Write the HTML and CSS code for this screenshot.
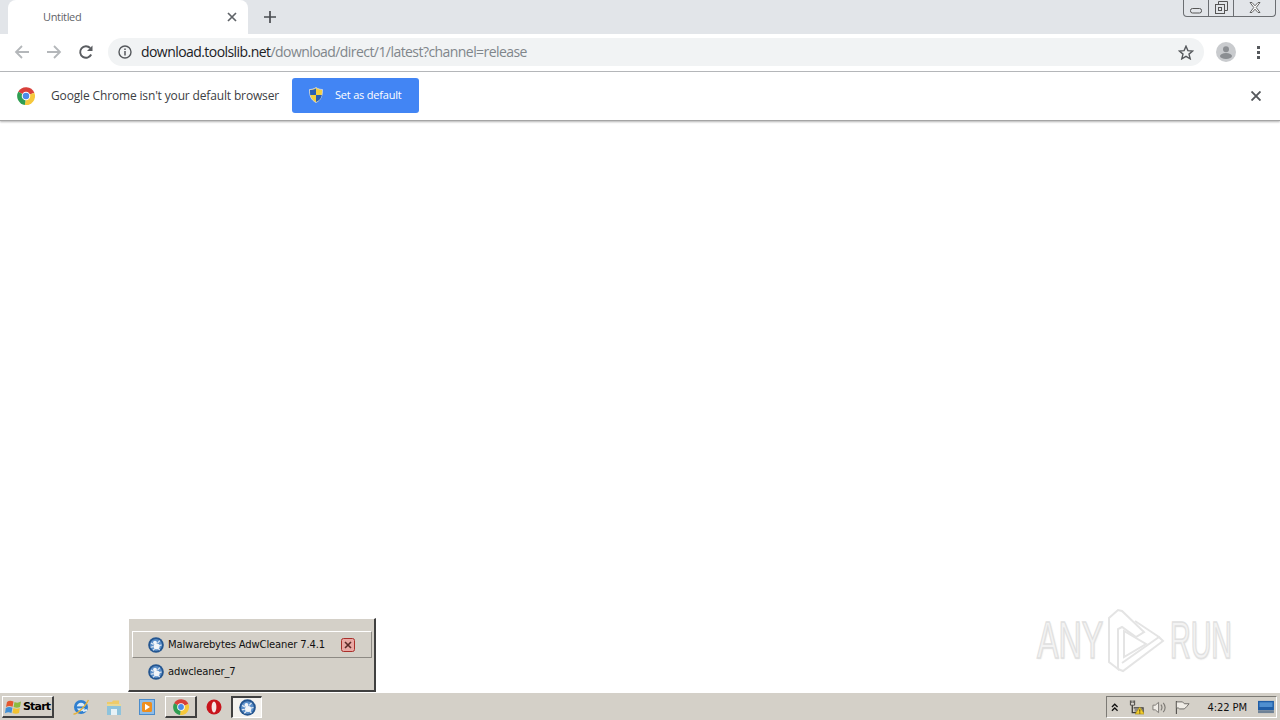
FILE: index.html
```html
<!DOCTYPE html>
<html lang="en">
    <head>
        <meta charset="UTF-8">
        <title>Untitled</title>
        <link rel="stylesheet" href="styles.css">
    </head>

    <body class="desktop">
        <svg class="icon-defs" width="0" height="0">
            <defs>
                <g id="chrome-logo">
                    <path d="M8 8 L1.1 4.2 A8 8 0 0 1 15.4 5 Z" fill="#d8403a"/>
                    <path d="M8 8 L15.4 5 A8 8 0 0 1 7 16 Z" fill="#f6c83c"/>
                    <path d="M8 8 L7 16 A8 8 0 0 1 1.1 4.2 Z" fill="#2f9e52"/>
                    <circle cx="8" cy="8" r="3.8" fill="#fff"/>
                    <circle cx="8" cy="8" r="2.9" fill="#4a8be8"/>
                </g>
                <g id="adw-logo">
                    <circle cx="8" cy="8" r="7.8" fill="#24558f"/>
                    <circle cx="8" cy="8" r="6" fill="#5b8fc9"/>
                    <ellipse cx="8.6" cy="9.4" rx="3" ry="2.8" fill="#f2f5f8"/>
                    <circle cx="7" cy="5.6" r="1.9" fill="#f2f5f8"/>
                    <path d="M3 6 L5.5 7.5 M11.8 3.6 L9.6 6 M2.6 10.2 L5.5 9.6 M13.6 8 L11 8.6 M5 13.4 L7 11.4 M11.6 13.2 L10 11.2" stroke="#e8edf3" stroke-width="1.1"/>
                </g>
            </defs>
        </svg>

        <header class="tabstrip">
            <div class="tabstrip__tab">
                <span class="tabstrip__tab__title">Untitled</span>
                <svg class="tabstrip__tab__close" width="10" height="10" viewBox="0 0 10 10">
                    <path d="M1 1 L9 9 M9 1 L1 9" stroke="#5f6368" stroke-width="1.7"/>
                </svg>
            </div>
            <svg class="tabstrip__new" width="12" height="12" viewBox="0 0 12 12">
                <path d="M6 0 V12 M0 6 H12" stroke="#4a4d51" stroke-width="1.7"/>
            </svg>
            <div class="tabstrip__controls">
                <span class="tabstrip__controls__button tabstrip__controls__button--min">
                    <svg width="12" height="6" viewBox="0 0 12 6"><rect x="0.5" y="0.5" width="11" height="4.5" rx="2" fill="none" stroke="#555"/></svg>
                </span>
                <span class="tabstrip__controls__button tabstrip__controls__button--max">
                    <svg width="13" height="13" viewBox="0 0 13 13"><path d="M3.5 3 V0.5 H12.5 V9.5 H10" fill="none" stroke="#555"/><rect x="0.5" y="3.5" width="9" height="9" fill="none" stroke="#555"/><rect x="3.5" y="6.5" width="3" height="3" fill="none" stroke="#555"/></svg>
                </span>
                <span class="tabstrip__controls__button tabstrip__controls__button--close">
                    <svg width="12" height="11" viewBox="0 0 12 11"><path d="M1 0.5 H3 L6 3.8 L9 0.5 H11 L7.2 5.5 L11 10.5 H9 L6 7.2 L3 10.5 H1 L4.8 5.5 Z" fill="#fff" stroke="#555" stroke-width="0.9"/></svg>
                </span>
            </div>
        </header>

        <nav class="toolbar">
            <svg class="toolbar__icon" width="16" height="16" viewBox="0 0 16 16">
                <path d="M15 8 H2 M8 2 L2 8 L8 14" fill="none" stroke="#b4b7ba" stroke-width="1.8"/>
            </svg>
            <svg class="toolbar__icon" width="16" height="16" viewBox="0 0 16 16">
                <path d="M1 8 H14 M8 2 L14 8 L8 14" fill="none" stroke="#b4b7ba" stroke-width="1.8"/>
            </svg>
            <svg class="toolbar__icon" width="16" height="16" viewBox="0 0 16 16">
                <path d="M13.2 10.5 A5.8 5.8 0 1 1 12.2 4" fill="none" stroke="#5a5d61" stroke-width="1.9"/>
                <path d="M14.5 1.5 V7 H9 Z" fill="#5a5d61"/>
            </svg>
            <div class="toolbar__omnibox">
                <svg class="toolbar__omnibox__info" width="14" height="14" viewBox="0 0 14 14">
                    <circle cx="7" cy="7" r="6" fill="none" stroke="#55585c" stroke-width="1.4"/>
                    <path d="M7 6 V10.5 M7 3.4 V5" stroke="#55585c" stroke-width="1.5"/>
                </svg>
                <span class="toolbar__omnibox__url"><span class="toolbar__omnibox__host">download.toolslib.net</span>/download/direct/1/latest?channel=release</span>
                <svg class="toolbar__omnibox__star" width="16" height="15" viewBox="0 0 16 15">
                    <path d="M8 1.2 L9.9 5.6 L14.7 6 L11 9.1 L12.2 13.8 L8 11.3 L3.8 13.8 L5 9.1 L1.3 6 L6.1 5.6 Z" fill="none" stroke="#55585c" stroke-width="1.4"/>
                </svg>
            </div>
            <svg class="toolbar__avatar" width="20" height="20" viewBox="0 0 20 20">
                <circle cx="10" cy="10" r="10" fill="#c9cbce"/>
                <circle cx="10" cy="7.2" r="3" fill="#8b8e92"/>
                <ellipse cx="10" cy="14" rx="6" ry="3" fill="#8b8e92"/>
            </svg>
            <span class="toolbar__menu">
                <span class="toolbar__menu__dot"></span>
                <span class="toolbar__menu__dot"></span>
                <span class="toolbar__menu__dot"></span>
            </span>
        </nav>

        <section class="infobar">
            <svg class="infobar__logo" width="18" height="18" viewBox="0 0 16 16"><use href="#chrome-logo"/></svg>
            <span class="infobar__message">Google Chrome isn't your default browser</span>
            <button class="infobar__button">
                <svg class="infobar__button__shield" width="16" height="16" viewBox="0 0 16 16">
                    <path d="M8 0.5 C10 2 12.5 2.5 14.5 2.5 C14.5 9 13 13 8 15.5 C3 13 1.5 9 1.5 2.5 C3.5 2.5 6 2 8 0.5 Z" fill="#f4d03f" stroke="#d5dbe6" stroke-width="0.8"/>
                    <path d="M8 1.5 V8 H2.2 C2.1 6 2 4.5 2 3 C4 3 6 2.6 8 1.5 Z M8 8 H13.8 C13.4 11 12 13.3 8 15 Z" fill="#2a5fb4"/>
                </svg>
                <span class="infobar__button__label">Set as default</span>
            </button>
            <svg class="infobar__close" width="10" height="10" viewBox="0 0 10 10">
                <path d="M0.5 0.5 L9.5 9.5 M9.5 0.5 L0.5 9.5" stroke="#55585c" stroke-width="1.9"/>
            </svg>
        </section>

        <main class="content">
            <div class="watermark">
                <span class="watermark__text watermark__text--any">ANY</span>
                <svg class="watermark__logo" width="60" height="66" viewBox="0 0 60 66">
                    <g fill="none" stroke="#e4e4e4" stroke-width="2">
                        <path d="M4 11 V55 L13 62 V22 L17 20 L31 30 L39 25 L17 4 L13 3 Z"/>
                        <path d="M13 62 L18 64 L58 34 L54 30 L17 56"/>
                        <path d="M19 24 L41 37 L19 50 Z"/>
                        <path d="M30 14 L54 30"/>
                    </g>
                </svg>
                <span class="watermark__text watermark__text--run">RUN</span>
            </div>

            <div class="popup">
                <div class="popup__item popup__item--active">
                    <svg width="16" height="16" viewBox="0 0 16 16"><use href="#adw-logo"/></svg>
                    <span class="popup__item__label">Malwarebytes AdwCleaner 7.4.1</span>
                    <svg class="popup__item__close" width="14" height="14" viewBox="0 0 14 14">
                        <rect x="0.5" y="0.5" width="13" height="13" rx="2" fill="#e9a9a5" stroke="#a92f2a"/>
                        <path d="M4 4 L10 10 M10 4 L4 10" stroke="#5b2a28" stroke-width="1.6"/>
                    </svg>
                </div>
                <div class="popup__item">
                    <svg width="16" height="16" viewBox="0 0 16 16"><use href="#adw-logo"/></svg>
                    <span class="popup__item__label">adwcleaner_7</span>
                </div>
            </div>
        </main>

        <footer class="taskbar">
            <button class="taskbar__start">
                <svg width="17" height="16" viewBox="0 0 17 16">
                    <path d="M2 3 C4 1.5 6 1.5 8.5 2.6 L7.6 7.8 C5.4 6.8 3 6.8 1 8 Z" fill="#e4572e"/>
                    <path d="M9.5 3 C11.5 4 13.5 4 16 2.6 L15 8 C13 9 10.8 9 8.6 8 Z" fill="#8cbb3e"/>
                    <path d="M0.8 9 C3 7.8 5.2 7.8 7.4 8.8 L6.5 14 C4.4 13 2.2 13 0 14.2 Z" fill="#3f8fd6"/>
                    <path d="M8.4 9 C10.6 10 12.8 10 14.8 9 L14 14 C12 15 9.8 15 7.5 14 Z" fill="#f2c230"/>
                </svg>
                <span class="taskbar__start__label">Start</span>
            </button>

            <div class="taskbar__apps">
                <span class="taskbar__app">
                    <svg width="18" height="18" viewBox="0 0 18 18">
                        <circle cx="9" cy="9" r="5.6" fill="#dcecf8" stroke="#2f7fd0" stroke-width="2.8"/>
                        <path d="M4 9.4 H14.5" stroke="#2f7fd0" stroke-width="2"/>
                        <path d="M11 13 L15 12" stroke="#dcecf8" stroke-width="2"/>
                        <path d="M1.5 16 C5 16.5 13 9 16.5 2" fill="none" stroke="#e6b23a" stroke-width="1.5"/>
                    </svg>
                </span>
                <span class="taskbar__app">
                    <svg width="16" height="17" viewBox="0 0 16 17">
                        <path d="M1 3 H6 L7 1.5 H13 V5 H1 Z" fill="#eecb6a"/>
                        <rect x="1" y="5" width="14" height="11" fill="#8ec3dc"/>
                        <rect x="1" y="5" width="14" height="2" fill="#e8d996"/>
                        <rect x="5" y="10" width="6" height="6" fill="#e8f2f6"/>
                    </svg>
                </span>
                <span class="taskbar__app">
                    <svg width="16" height="16" viewBox="0 0 16 16">
                        <rect x="0.5" y="0.5" width="15" height="15" fill="#8fbde8" stroke="#4b8ccb"/>
                        <rect x="3" y="3" width="10" height="10" rx="1.5" fill="#ee8f1f"/>
                        <path d="M6 4.8 L11 8 L6 11.2 Z" fill="#fff"/>
                    </svg>
                </span>
                <span class="taskbar__app taskbar__app--raised">
                    <svg width="16" height="16" viewBox="0 0 16 16"><use href="#chrome-logo"/></svg>
                </span>
                <span class="taskbar__app">
                    <svg width="16" height="16" viewBox="0 0 16 16">
                        <circle cx="8" cy="8" r="7.5" fill="#c8141c"/>
                        <ellipse cx="8" cy="8" rx="2.4" ry="5.6" fill="#f6e6e6"/>
                    </svg>
                </span>
                <span class="taskbar__app taskbar__app--pressed">
                    <svg width="17" height="17" viewBox="0 0 16 16"><use href="#adw-logo"/></svg>
                </span>
            </div>

            <div class="taskbar__tray">
                <svg width="8" height="9" viewBox="0 0 8 9">
                    <path d="M1 4 L4 1 L7 4 M1 8 L4 5 L7 8" fill="none" stroke="#111" stroke-width="1.4"/>
                </svg>
                <svg class="taskbar__tray__network" width="17" height="16" viewBox="0 0 17 16">
                    <path d="M1.5 1 V6 H6 V1 M3 1 V4 M4.5 1 V4" fill="#f2efe9" stroke="#3f3d3a" stroke-width="1"/>
                    <path d="M3.5 6 V14 H8 M5 9 H15 V14" fill="none" stroke="#3f3d3a" stroke-width="1.4"/>
                    <rect x="6" y="10" width="8" height="3" fill="#8c8a86"/>
                    <path d="M11.5 8 L16.5 15.5 H6.5 Z" fill="#f3cc2c" stroke="#a08a1a" stroke-width="0.7"/>
                    <path d="M11.5 10.5 V13 M11.5 13.7 V15" stroke="#3a3310" stroke-width="1"/>
                </svg>
                <svg width="16" height="15" viewBox="0 0 16 15">
                    <path d="M1 5 H3.5 L7 2 V13 L3.5 10 H1 Z" fill="#f0ede7" stroke="#7d7a75"/>
                    <path d="M9.5 4.5 C11 6.5 11 8.5 9.5 10.5 M12 2.5 C14.4 5.5 14.4 9.5 12 12.5" fill="none" stroke="#7d7a75" stroke-width="1.2"/>
                </svg>
                <svg width="16" height="15" viewBox="0 0 16 15">
                    <path d="M1.5 0.5 V14.5" stroke="#55524e" stroke-width="1.2"/>
                    <path d="M1.5 1.5 H8 L10 3.5 H15 L12.5 6.5 L10 9 H5 L3.5 8 H1.5 Z" fill="#f0ede7" stroke="#6a6763" stroke-width="1"/>
                </svg>
                <span class="taskbar__tray__clock">4:22 PM</span>
                <svg width="17" height="14" viewBox="0 0 17 14">
                    <rect x="0" y="0.5" width="17" height="10" fill="#1f5da6"/>
                    <rect x="1.5" y="2" width="14" height="5" fill="#4f8fd0"/>
                    <rect x="0" y="10.5" width="17" height="3" fill="#6f8296"/>
                </svg>
            </div>
        </footer>
    </body>
</html>
```

FILE: styles.css
```css
html,
body {
    border: none;
    height: 100%;
    margin: 0 0 0 0;
    overflow: hidden;
    padding: 0 0 0 0;
    width: 100%;
}

:root {
    --color-chrome: #e2e5e9;
    --color-omnibox: #f1f3f4;
    --color-blue: #4285f4;
    --color-win: #d4d0c8;
    --font-ui: "Open Sans", "Noto Sans", sans-serif;
    --font-win: "DejaVu Sans", "Liberation Sans", sans-serif;
}

.desktop {
    background: #fff;
    color: #333;
    display: flex;
    flex-direction: column;
    font-family: var(--font-ui);
}

.icon-defs {
    position: absolute;
}

/* tab row */
.tabstrip {
    align-items: center;
    background: var(--color-chrome);
    display: flex;
    flex: none;
    height: 34px;
    padding-left: 8px;
    position: relative;
}

.tabstrip__tab {
    align-items: center;
    background: #fff;
    border-radius: 8px 8px 0 0;
    box-sizing: border-box;
    display: flex;
    height: 34px;
    justify-content: space-between;
    padding: 0 11px 0 35px;
    width: 240px;
}

.tabstrip__tab__title {
    color: #5f6368;
    font-size: 11px;
    letter-spacing: -0.35px;
    margin-bottom: 2px;
}

.tabstrip__new {
    margin-left: 16px;
}

.tabstrip__controls {
    background: var(--color-chrome);
    border: 1px solid #6b6e72;
    border-radius: 0 0 4px 4px;
    border-top: none;
    display: flex;
    height: 16px;
    margin-left: auto;
    margin-right: 4px;
    margin-top: -18px;
}

.tabstrip__controls__button {
    align-items: center;
    display: flex;
    justify-content: center;
    width: 24px;
}

.tabstrip__controls__button--min {
    align-items: flex-end;
    padding-bottom: 2px;
}

.tabstrip__controls__button--close {
    width: 41px;
}

.tabstrip__controls__button--max {
    border-left: 1px solid #6b6e72;
    border-right: 1px solid #6b6e72;
}

/* url row */
.toolbar {
    align-items: center;
    background: #fff;
    border-bottom: 1px solid #b8babd;
    display: flex;
    flex: none;
    height: 36px;
    padding: 0 0 1px 14px;
}

.toolbar__icon {
    margin-right: 16px;
}

.toolbar__omnibox {
    align-items: center;
    background: var(--color-omnibox);
    border-radius: 14px;
    display: flex;
    height: 28px;
    margin-left: -2px;
    padding: 0 10px;
    width: 1076px;
}

.toolbar__omnibox__info {
    flex: none;
}

.toolbar__omnibox__url {
    color: #80868b;
    flex: 1;
    font-size: 14px;
    letter-spacing: -0.56px;
    margin-left: 9px;
    margin-bottom: 1px;
}

.toolbar__omnibox__host {
    color: #202124;
}

.toolbar__avatar {
    margin-left: 12px;
}

.toolbar__menu {
    align-items: center;
    display: flex;
    flex-direction: column;
    gap: 2px;
    margin-left: 21px;
}

.toolbar__menu__dot {
    background: #55585c;
    height: 3px;
    width: 3px;
}

/* default browser bar */
.infobar {
    align-items: center;
    background: #fff;
    border-bottom: 1px solid #a5a5a5;
    box-shadow: 0 1px 2px rgba(0, 0, 0, 0.3);
    display: flex;
    flex: none;
    height: 46px;
    padding: 0 16px 2px 17px;
    position: relative;
}

.infobar__logo {
    margin-top: 2px;
}

.infobar__message {
    color: #3c4043;
    font-size: 12px;
    letter-spacing: -0.15px;
    margin-left: 16px;
}

.infobar__button {
    align-items: center;
    background: var(--color-blue);
    border: none;
    border-radius: 3px;
    box-sizing: border-box;
    color: #fff;
    display: flex;
    flex: none;
    font-family: var(--font-ui);
    font-size: 11px;
    gap: 11px;
    height: 35px;
    margin-left: 13px;
    padding: 0 16px;
    width: 127px;
}

.infobar__button__label {
    letter-spacing: -0.2px;
    margin-bottom: 2px;
    white-space: nowrap;
}

.infobar__close {
    margin-left: auto;
    margin-right: 3px;
    margin-top: 2px;
}

/* page area */
.content {
    flex: 1;
    position: relative;
}

.watermark {
    align-items: center;
    bottom: 19px;
    display: flex;
    position: absolute;
    right: 48px;
}

.watermark__logo {
    margin: 0 5px 0 2px;
}

.watermark__text {
    color: #f3f3f3;
    font-family: "Liberation Sans", sans-serif;
    font-size: 51px;
    line-height: 51px;
    text-shadow: 1px 1px 2px #dedede;
    transform-origin: left center;
    -webkit-text-stroke: 1.5px #e0e0e0;
}

.watermark__text--any {
    transform: scaleX(0.63);
    width: 66px;
}

.watermark__text--run {
    transform: scaleX(0.56);
    width: 62px;
}

.popup {
    background: var(--color-win);
    border-bottom: 2px solid #404040;
    border-left: 1px solid #fff;
    border-right: 2px solid #404040;
    border-top: 1px solid #fff;
    bottom: 0;
    box-sizing: border-box;
    display: flex;
    flex-direction: column;
    height: 74px;
    left: 128px;
    padding: 12px 2px 0 3px;
    position: absolute;
    width: 248px;
}

.popup__item {
    align-items: center;
    box-sizing: border-box;
    color: #111;
    display: flex;
    flex: none;
    font-family: var(--font-win);
    font-size: 10px;
    gap: 4px;
    height: 27px;
    letter-spacing: -0.14px;
    padding-left: 16px;
}

.popup__item--active {
    border-bottom: 1px solid #8d8a84;
    border-left: 1px solid #fff;
    border-right: 1px solid #8d8a84;
    border-top: 1px solid #fff;
    padding-left: 15px;
}

.popup__item__label {
    white-space: nowrap;
}

.popup__item__close {
    margin-left: auto;
    margin-right: 16px;
}

/* windows taskbar */
.taskbar {
    align-items: center;
    background: var(--color-win);
    border-top: 1px solid #fff;
    box-sizing: border-box;
    display: flex;
    flex: none;
    height: 28px;
    padding: 1px 2px 0 2px;
}

.taskbar__start {
    align-items: center;
    background: var(--color-win);
    border-bottom: 2px solid #404040;
    border-left: 1px solid #fff;
    border-right: 2px solid #404040;
    border-top: 1px solid #fff;
    box-sizing: border-box;
    color: #000;
    display: flex;
    font-family: var(--font-win);
    font-size: 11px;
    font-weight: bold;
    gap: 1px;
    height: 22px;
    padding: 0 0 0 2px;
    width: 52px;
}

.taskbar__start__label {
    letter-spacing: -0.8px;
}

.taskbar__apps {
    align-items: center;
    display: flex;
    margin-left: 10px;
}

.taskbar__app {
    align-items: center;
    box-sizing: border-box;
    display: flex;
    height: 22px;
    justify-content: center;
    width: 33px;
}

.taskbar__app--raised {
    border-bottom: 2px solid #404040;
    border-left: 1px solid #fff;
    border-right: 2px solid #404040;
    border-top: 1px solid #fff;
    margin-left: 2px;
    width: 32px;
}

.taskbar__app--pressed {
    background: #f4f2ee;
    border-bottom: 1px solid #fff;
    border-left: 2px solid #404040;
    border-right: 1px solid #fff;
    border-top: 2px solid #404040;
    margin-left: 1px;
    width: 31px;
}

.taskbar__tray {
    align-items: center;
    border-bottom: 1px solid #fff;
    border-left: 1px solid #7c7a75;
    border-right: 1px solid #fff;
    border-top: 1px solid #7c7a75;
    box-sizing: border-box;
    display: flex;
    gap: 8px;
    height: 22px;
    margin-left: auto;
    margin-right: 1px;
    padding: 0 2px 0 4px;
    width: 171px;
}

.taskbar__tray__network {
    margin-left: 2px;
}

.taskbar__tray__clock {
    color: #111;
    font-family: var(--font-win);
    font-size: 10px;
    letter-spacing: -0.1px;
    margin-left: 9px;
    margin-right: 3px;
    white-space: nowrap;
}
```
